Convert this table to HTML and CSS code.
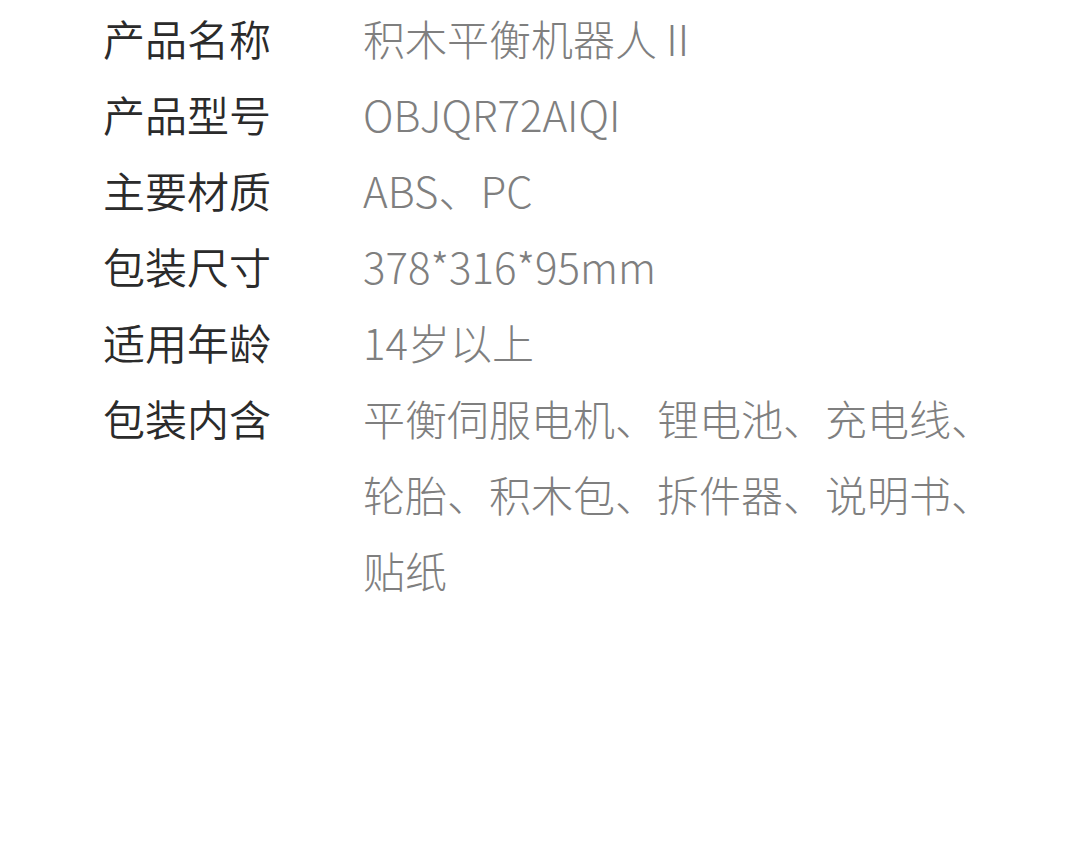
FILE: index.html
```html
<!DOCTYPE html>
<html lang="zh-CN">
<head>
    <meta charset="UTF-8">
    <meta name="viewport" content="width=device-width, initial-scale=1.0">
    <title>产品参数</title>
    <link rel="stylesheet" href="styles.css">
</head>
<body>
    <section class="specs">
        <div class="row">
            <div class="label">产品名称</div>
            <div class="value">积木平衡机器人 II</div>
        </div>
        <div class="row">
            <div class="label">产品型号</div>
            <div class="value">OBJQR72AIQI</div>
        </div>
        <div class="row">
            <div class="label">主要材质</div>
            <div class="value">ABS、PC</div>
        </div>
        <div class="row">
            <div class="label">包装尺寸</div>
            <div class="value">378*316*95mm</div>
        </div>
        <div class="row">
            <div class="label">适用年龄</div>
            <div class="value">14岁以上</div>
        </div>
        <div class="row">
            <div class="label">包装内含</div>
            <div class="value">平衡伺服电机、锂电池、充电线、轮胎、积木包、拆件器、说明书、贴纸</div>
        </div>
    </section>
</body>
</html>
```

FILE: styles.css
```css
body {
    margin: 0;
    padding: 0;
    background-color: #fff;
    font-family: "Noto Sans CJK SC", "Noto Sans", sans-serif;
}

.specs {
    padding: 0 0 0 103px;
}

.row {
    display: flex;
    font-size: 42px;
    line-height: 76px;
}

.label {
    width: 260px;
    flex-shrink: 0;
    color: #2b2b2b;
    font-weight: 350;
}

.value {
    width: 640px;
    color: #7f7f7f;
    font-weight: 300;
}
```
